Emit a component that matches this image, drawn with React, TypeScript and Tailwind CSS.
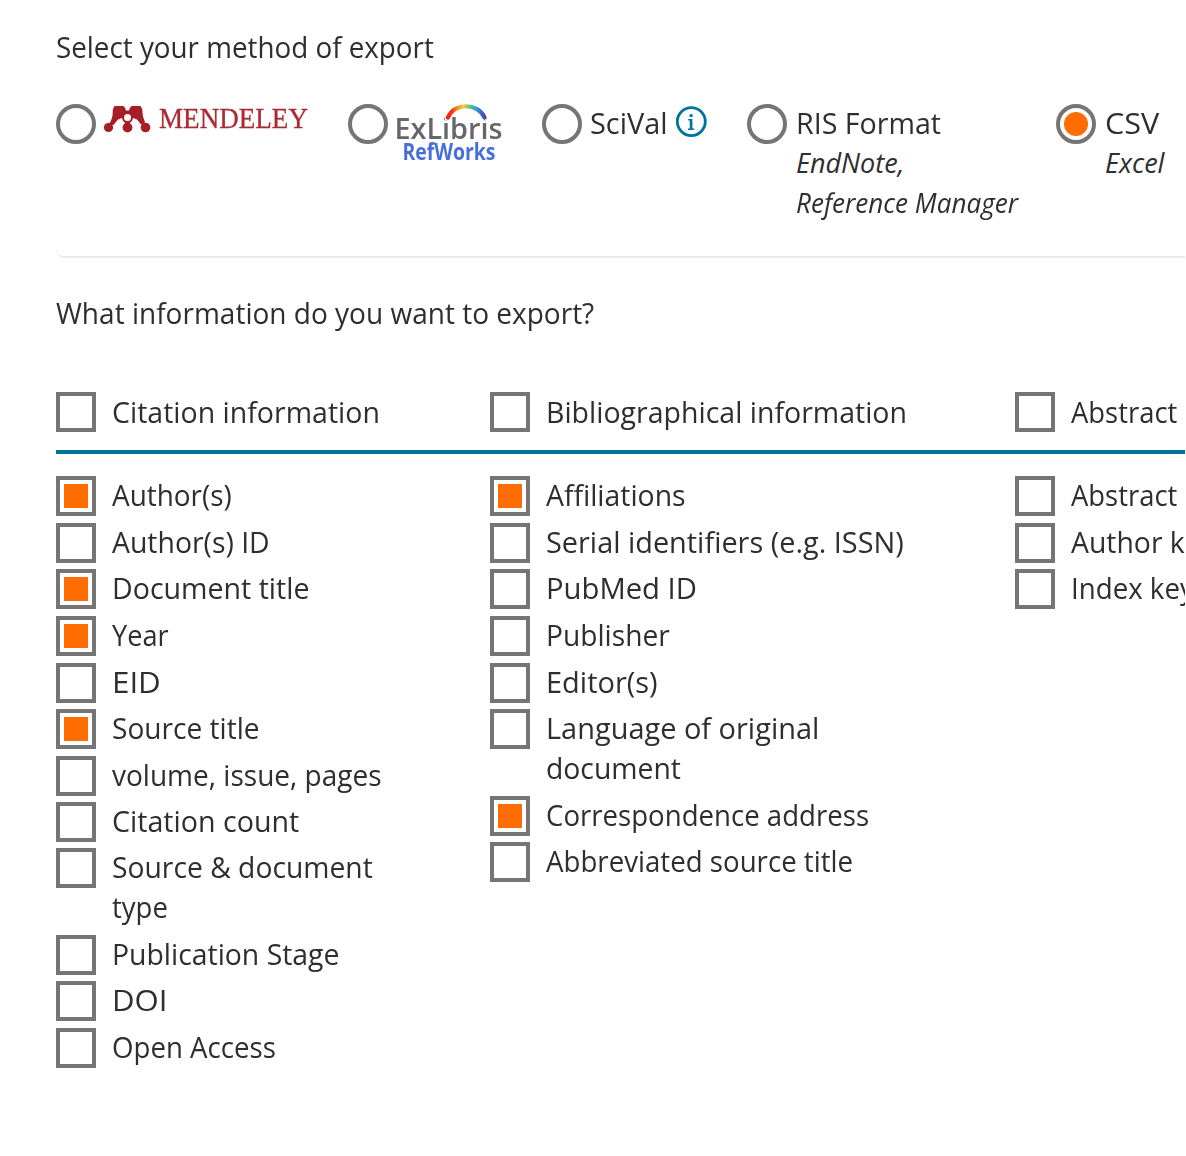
import React, { useLayoutEffect, useRef, useState } from 'react';

type Line = [text: string, width: number];
type Item = { lines: Line[]; gap: string; checked?: boolean };

/* One line of text, condensed horizontally to the given width. */
function Fit({ line, className = '' }: { line: Line; className?: string }) {
  const ref = useRef<HTMLSpanElement>(null);
  const [scale, setScale] = useState(1);
  useLayoutEffect(() => {
    if (ref.current) setScale(line[1] / ref.current.offsetWidth);
  }, [line]);
  return (
    <div className={`h-10 whitespace-nowrap leading-10 ${className}`}>
      <span ref={ref} className="inline-block origin-left" style={{ transform: `scaleX(${scale})` }}>
        {line[0]}
      </span>
    </div>
  );
}

function Radio({ checked = false }: { checked?: boolean }) {
  return (
    <span className="flex size-10 shrink-0 items-center justify-center rounded-full border-4 border-[#757575]">
      {checked && <span className="size-6 rounded-full bg-[#ff6c00]" />}
    </span>
  );
}

function Check({ item, header = false }: { item: Item; header?: boolean }) {
  return (
    <label className={`flex gap-4 ${item.gap}`}>
      <span className="flex size-10 shrink-0 items-center justify-center border-4 border-[#757575]">
        {item.checked && <span className="size-6 bg-[#ff6c00]" />}
      </span>
      <span className={header ? 'block h-10 w-0' : '-mt-px mb-px block w-0'}>
        {item.lines.map((l) => (
          <Fit key={l[0]} line={l} />
        ))}
      </span>
    </label>
  );
}

const one = (text: string, width: number, gap: string, checked = false): Item => ({ lines: [[text, width]], gap, checked });

const headers = [
  one('Citation information', 268, 'mt-0'),
  one('Bibliographical information', 361, 'mt-0'),
  one('Abstract', 106, 'mt-0'),
];

const columns: Item[][] = [
  [
    one('Author(s)', 120, 'mt-0', true),
    one('Author(s) ID', 158, 'mt-[7px]'),
    one('Document title', 197, 'mt-[6px]', true),
    one('Year', 57, 'mt-[7px]', true),
    one('EID', 49, 'mt-[7px]'),
    one('Source title', 148, 'mt-[6px]', true),
    one('volume, issue, pages', 270, 'mt-[7px]'),
    one('Citation count', 187, 'mt-[6px]'),
    { lines: [['Source & document', 261], ['type', 56]], gap: 'mt-[6px]' },
    one('Publication Stage', 227, 'mt-[7px]'),
    one('DOI', 55, 'mt-[6px]'),
    one('Open Access', 164, 'mt-[7px]'),
  ],
  [
    one('Affiliations', 140, 'mt-0', true),
    one('Serial identifiers (e.g. ISSN)', 358, 'mt-[7px]'),
    one('PubMed ID', 151, 'mt-[6px]'),
    one('Publisher', 124, 'mt-[7px]'),
    one('Editor(s)', 112, 'mt-[7px]'),
    { lines: [['Language of original', 273], ['document', 135]], gap: 'mt-[6px]' },
    one('Correspondence address', 323, 'mt-[7px]', true),
    one('Abbreviated source title', 307, 'mt-[6px]'),
  ],
  [
    one('Abstract', 106, 'mt-0'),
    one('Author keywords', 225, 'mt-[7px]'),
    one('Index keywords', 202, 'mt-[6px]'),
  ],
];

const method: Line = ['Select your method of export', 378];
const question: Line = ['What information do you want to export?', 538];
const scival: Line = ['SciVal', 78];
const ris: Line = ['RIS Format', 145];
const endnote: Line = ['EndNote,', 108];
const manager: Line = ['Reference Manager', 222];
const csv: Line = ['CSV', 54];
const excel: Line = ['Excel', 59];

function MendeleyLogo() {
  return (
    <svg className="block h-8 w-[206px] shrink-0 overflow-visible blur-[0.4px]" viewBox="0 0 206 32">
      <g fill="#a51e28">
        <path d="M10.500 2H19.500Q21.500 3.500 22 6.500H25Q25.500 3.500 27.500 2H36.500Q38.500 4 38.500 8.500Q38.500 13 41 18L39 21 36.500 20 33 15.500 29 14 25.500 18.500V22H21.500V18.500L18 14 14 15.500 9.500 21 5 20Q9 14 8.700 8.500Q8.700 4 10.500 2Z" />
        <circle cx="4.500" cy="23.500" r="4.600" />
        <circle cx="23.500" cy="23.500" r="4.900" />
        <circle cx="41.500" cy="23.500" r="4.800" />
        <circle cx="23.500" cy="14" r="5.300" />
      </g>
      <circle cx="23.500" cy="13.500" r="3.500" fill="#fff" />
      <text x="55" y="24" fontFamily="Liberation Serif, serif" fontSize="28.5" textLength="149" lengthAdjust="spacingAndGlyphs" fill="#ab2b35" stroke="#ab2b35" strokeWidth="0.3">
        MENDELEY
      </text>
    </svg>
  );
}

function RefWorksLogo() {
  return (
    <svg className="block h-16 w-[110px] shrink-0 overflow-visible blur-[0.4px]" viewBox="0 0 110 64">
      <defs>
        <linearGradient id="arc" x1="50" x2="92" y1="0" y2="0" gradientUnits="userSpaceOnUse">
          <stop offset="0" stopColor="#f01414" />
          <stop offset="0.15" stopColor="#fa3a16" />
          <stop offset="0.3" stopColor="#ffa01a" />
          <stop offset="0.42" stopColor="#f0d040" />
          <stop offset="0.56" stopColor="#5fc77a" />
          <stop offset="0.76" stopColor="#2f8fe8" />
          <stop offset="0.95" stopColor="#5b2ca0" />
        </linearGradient>
      </defs>
      <text x="-1.500" y="34.5" fontFamily="Open Sans, sans-serif" fontSize="29" fontWeight="600" textLength="108" lengthAdjust="spacingAndGlyphs" fill="#66676b">
        ExLibris
      </text>
      <path d="M49 9H56V16.500H49ZM85 9H92V16.500H85Z" fill="#fff" />
      <path d="M52 13.500C58-1.500 82-1.500 88.500 13.500" fill="none" stroke="url(#arc)" strokeWidth="4.200" strokeLinecap="round" />
      <text x="6.500" y="56" fontFamily="Open Sans, sans-serif" fontSize="22.500" fontWeight="700" textLength="93" lengthAdjust="spacingAndGlyphs" fill="#466fdc">
        RefWorks
      </text>
    </svg>
  );
}

export default function App() {
  return (
    <div className="h-[1156px] w-[1186px] bg-white font-['Open_Sans',sans-serif] text-[30px] text-[#2e2e2e]">
      <main className="h-full w-[1185px] overflow-hidden pl-14">
        <section className="h-[258px] rounded-bl-lg border-b-2 border-[#ebebeb] pt-[27px]">
          <Fit line={method} />
          <div className="mt-[37px] grid grid-cols-[292px_194px_205px_309px_200px]">
            <div className="flex gap-2">
              <Radio />
              <MendeleyLogo />
            </div>
            <div className="flex gap-2">
              <Radio />
              <RefWorksLogo />
            </div>
            <div className="flex">
              <Radio />
              <div className="-mt-px ml-2 w-[85px]">
                <Fit line={scival} />
              </div>
              <svg className="mt-0.5 block size-8" viewBox="0 0 32 32" fill="none" stroke="#007398">
                <circle cx="16.300" cy="15.600" r="14" strokeWidth="2.800" />
                <path d="M14.600 8.200H17.600V11H14.600ZM13.200 13H17.400V22.600H19V24H13V22.600H14.700V14.400H13.200Z" fill="#007398" stroke="none" />
              </svg>
            </div>
            <div className="flex">
              <Radio />
              <div className="-mt-px ml-[9px]">
                <Fit line={ris} />
                <div className="text-[27px] italic">
                  <Fit line={endnote} />
                  <Fit line={manager} />
                </div>
              </div>
            </div>
            <div className="flex">
              <Radio checked />
              <div className="-mt-px ml-[9px]">
                <Fit line={csv} />
                <div className="text-[27px] italic">
                  <Fit line={excel} />
                </div>
              </div>
            </div>
          </div>
        </section>
        <section>
          <Fit line={question} className="mt-[35px]" />
          <div className="mt-[59px] grid grid-cols-[434px_525px_300px] border-b-4 border-[#007398] pb-[18px]">
            {headers.map((h) => (
              <Check key={h.lines[0][0]} item={h} header />
            ))}
          </div>
          <div className="mt-[22px] grid grid-cols-[434px_525px_300px]">
            {columns.map((items, i) => (
              <div key={i}>
                {items.map((item) => (
                  <Check key={item.lines[0][0]} item={item} />
                ))}
              </div>
            ))}
          </div>
        </section>
      </main>
    </div>
  );
}
